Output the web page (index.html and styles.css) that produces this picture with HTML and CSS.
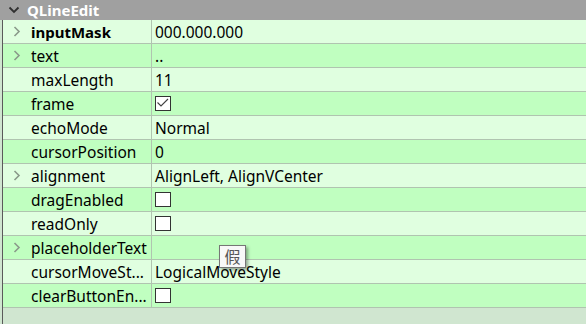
FILE: index.html
```html
<!DOCTYPE html>
<html>
<head>
<meta charset="utf-8">
<link rel="stylesheet" href="styles.css">
</head>
<body>
<div class="panel">
  <div class="header">
    <svg class="chev-down" width="12" height="8" viewBox="0 0 12 8"><path d="M1.5 1.5 L6 6 L10.5 1.5" fill="none" stroke="#303030" stroke-width="1.8"/></svg>
    <span class="htitle">QLineEdit</span>
  </div>
  <div class="rows">
    <div class="row light"><div class="name"><svg class="chev" width="8" height="11" viewBox="0 0 8 11"><path d="M1.5 1 L6 5.5 L1.5 10" fill="none" stroke="#8a9a8a" stroke-width="1.6"/></svg><span class="bold">inputMask</span></div><div class="val">000.000.000</div></div>
    <div class="row dark"><div class="name"><svg class="chev" width="8" height="11" viewBox="0 0 8 11"><path d="M1.5 1 L6 5.5 L1.5 10" fill="none" stroke="#8a9a8a" stroke-width="1.6"/></svg><span>text</span></div><div class="val">..</div></div>
    <div class="row light"><div class="name"><span>maxLength</span></div><div class="val">11</div></div>
    <div class="row dark"><div class="name"><span>frame</span></div><div class="val"><span class="cb"><svg width="14" height="13" viewBox="0 0 14 13"><path d="M1.5 5.5 L5 9 L12 2" fill="none" stroke="#404040" stroke-width="1.1"/></svg></span></div></div>
    <div class="row light"><div class="name"><span>echoMode</span></div><div class="val">Normal</div></div>
    <div class="row dark"><div class="name"><span>cursorPosition</span></div><div class="val">0</div></div>
    <div class="row light"><div class="name"><svg class="chev" width="8" height="11" viewBox="0 0 8 11"><path d="M1.5 1 L6 5.5 L1.5 10" fill="none" stroke="#8a9a8a" stroke-width="1.6"/></svg><span>alignment</span></div><div class="val">AlignLeft, AlignVCenter</div></div>
    <div class="row dark"><div class="name"><span>dragEnabled</span></div><div class="val"><span class="cb"></span></div></div>
    <div class="row light"><div class="name"><span>readOnly</span></div><div class="val"><span class="cb"></span></div></div>
    <div class="row dark"><div class="name"><svg class="chev" width="8" height="11" viewBox="0 0 8 11"><path d="M1.5 1 L6 5.5 L1.5 10" fill="none" stroke="#8a9a8a" stroke-width="1.6"/></svg><span>placeholderText</span></div><div class="val"></div></div>
    <div class="row light"><div class="name"><span>cursorMoveSt...</span></div><div class="val">LogicalMoveStyle</div></div>
    <div class="row dark"><div class="name"><span>clearButtonEn...</span></div><div class="val"><span class="cb"></span></div></div>
  </div>
  <div class="filler"></div>
  <div class="tooltip">假</div>
</div>
</body>
</html>
```
FILE: styles.css
```css
html, body {
  margin: 0;
  padding: 0;
}
body {
  width: 586px;
  height: 324px;
  overflow: hidden;
  font-family: "Noto Sans", "Noto Sans CJK SC", sans-serif;
  font-size: 15.5px;
  color: #000;
  background: #d0e6d0;
}
.panel {
  position: relative;
  width: 586px;
  height: 324px;
  display: flex;
  flex-direction: column;
}
.header {
  height: 20px;
  background: #a0a0a0;
  display: flex;
  align-items: center;
  flex-shrink: 0;
}
.chev-down {
  margin-left: 8px;
  margin-right: 7px;
}
.htitle {
  color: #fff;
  font-weight: bold;
  font-size: 15px;
  line-height: 20px;
}
.rows {
  border-left: 1px solid #5a5a5a;
  margin-left: 2px;
  display: flex;
  flex-direction: column;
}
.row {
  height: 23px;
  border-bottom: 1px solid #b0c4b0;
  display: flex;
}
.light { background: #e0ffe0; }
.dark { background: #c0ffc0; }
.name {
  width: 149px;
  border-right: 1px solid #b0c4b0;
  display: flex;
  align-items: center;
  padding-left: 28px;
  box-sizing: border-box;
  position: relative;
  white-space: nowrap;
  overflow: hidden;
}
.chev {
  position: absolute;
  left: 10px;
  top: 6px;
}
.bold { font-weight: bold; font-size: 15px; }
.val {
  flex: 1;
  display: flex;
  align-items: center;
  padding-left: 3px;
  white-space: nowrap;
}
.cb {
  width: 16px;
  height: 15px;
  box-sizing: border-box;
  border: 1px solid #333;
  background: #fff;
  display: flex;
  align-items: center;
  justify-content: center;
}
.cb svg { display: block; }
.filler {
  flex: 1;
  margin-left: 2px;
  border-left: 1px solid #5a5a5a;
  background: #d0e6d0;
}
.tooltip {
  position: absolute;
  left: 219px;
  top: 245px;
  width: 27px;
  height: 23px;
  box-sizing: border-box;
  border: 1px solid #767676;
  background: #f8f8f8;
  color: #575757;
  font-family: "Noto Sans CJK SC", sans-serif;
  font-size: 16px;
  line-height: 21px;
  text-align: center;
  box-shadow: 2px 2px 3px rgba(0,0,0,0.35);
}
```
